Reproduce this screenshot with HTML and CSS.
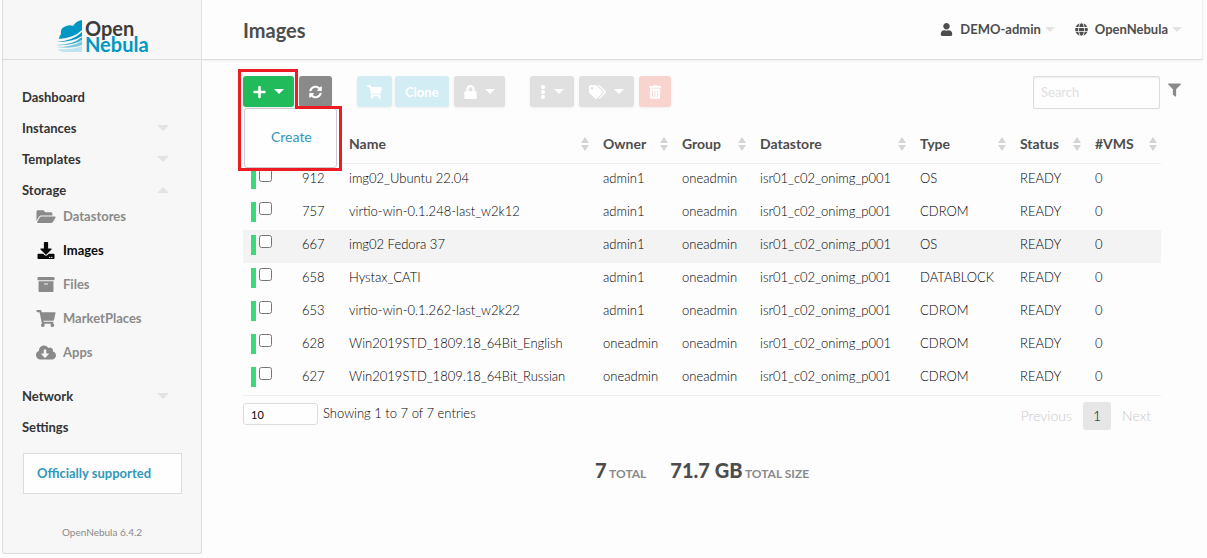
FILE: index.html
```
<!DOCTYPE html>
<html lang="en">
<head>
<meta charset="utf-8">
<title>OpenNebula Sunstone: Images</title>
<link rel="stylesheet" href="styles.css">
</head>
<body>
<svg class="sprite" aria-hidden="true">
  <symbol id="plus" viewBox="0 0 448 512"><path d="M416 208H272V64c0-17.670-14.330-32-32-32h-32c-17.670 0-32 14.330-32 32v144H32c-17.670 0-32 14.330-32 32v32c0 17.670 14.330 32 32 32h144v144c0 17.670 14.330 32 32 32h32c17.670 0 32-14.330 32-32V304h144c17.670 0 32-14.330 32-32v-32c0-17.670-14.330-32-32-32z"/></symbol>
  <symbol id="sync" viewBox="0 0 512 512"><path d="M370.720 133.280C339.458 104.008 298.888 87.962 255.848 88c-77.458.068-144.328 53.178-162.791 126.850-1.344 5.363-6.122 9.150-11.651 9.150H24.103c-7.498 0-13.194-6.807-11.807-14.176C33.933 94.924 134.813 8 256 8c66.448 0 126.791 26.136 171.315 68.685L463.030 40.970C478.149 25.851 504 36.559 504 57.941V192c0 13.255-10.745 24-24 24H345.941c-21.382 0-32.090-25.851-16.971-40.971l41.750-41.749zM32 296h134.059c21.382 0 32.090 25.851 16.971 40.971l-41.750 41.750c31.262 29.273 71.835 45.319 114.876 45.280 77.418-.070 144.315-53.144 162.787-126.849 1.344-5.363 6.122-9.150 11.651-9.150h57.304c7.498 0 13.194 6.807 11.807 14.176C478.067 417.076 377.187 504 256 504c-66.448 0-126.791-26.136-171.315-68.685L48.970 471.030C33.851 486.149 8 475.441 8 454.059V320c0-13.255 10.745-24 24-24z"/></symbol>
  <symbol id="cart" viewBox="0 0 576 512"><path d="M528.120 301.319l47.273-208C578.806 78.301 567.391 64 551.990 64H159.208l-9.166-44.810C147.758 8.021 137.930 0 126.529 0H24C10.745 0 0 10.745 0 24v16c0 13.255 10.745 24 24 24h69.883l70.248 343.435C147.325 417.100 136 435.222 136 456c0 30.928 25.072 56 56 56s56-25.072 56-56c0-15.674-6.447-29.835-16.824-40h209.647C430.447 426.165 424 440.326 424 456c0 30.928 25.072 56 56 56s56-25.072 56-56c0-22.172-12.888-41.332-31.579-50.405l5.517-24.276c3.413-15.018-8.002-29.319-23.403-29.319H218.117l-6.545-32h293.145c11.206 0 20.920-7.754 23.403-18.681z"/></symbol>
  <symbol id="lock" viewBox="0 0 448 512"><path d="M400 224h-24v-72C376 68.200 307.800 0 224 0S72 68.200 72 152v72H48c-26.500 0-48 21.500-48 48v192c0 26.500 21.500 48 48 48h352c26.500 0 48-21.500 48-48V272c0-26.500-21.500-48-48-48zm-104 0H152v-72c0-39.700 32.300-72 72-72s72 32.300 72 72v72z"/></symbol>
  <symbol id="dots" viewBox="0 0 192 512"><circle cx="96" cy="80" r="76"/><circle cx="96" cy="256" r="76"/><circle cx="96" cy="432" r="76"/></symbol>
  <symbol id="tags" viewBox="0 0 640 512"><path d="M497.941 225.941L286.059 14.059A48 48 0 0 0 252.118 0H48C21.490 0 0 21.490 0 48v204.118a48 48 0 0 0 14.059 33.941l211.882 211.882c18.744 18.745 49.136 18.746 67.882 0l204.118-204.118c18.745-18.745 18.745-49.137 0-67.882zM112 160c-26.510 0-48-21.490-48-48s21.490-48 48-48 48 21.490 48 48-21.490 48-48 48zm513.941 133.823L421.823 497.941c-18.745 18.745-49.137 18.745-67.882 0l-.360-.360L527.640 323.522c16.999-16.999 26.360-39.600 26.360-63.640s-9.362-46.641-26.360-63.640L331.397 0h48.721a48 48 0 0 1 33.941 14.059l211.882 211.882c18.745 18.745 18.745 49.137 0 67.882z"/></symbol>
  <symbol id="trash" viewBox="0 0 448 512"><path d="M32 464a48 48 0 0 0 48 48h288a48 48 0 0 0 48-48V128H32zm272-256a16 16 0 0 1 32 0v224a16 16 0 0 1-32 0zm-96 0a16 16 0 0 1 32 0v224a16 16 0 0 1-32 0zm-96 0a16 16 0 0 1 32 0v224a16 16 0 0 1-32 0zM432 32H312l-9.400-18.700A24 24 0 0 0 281.100 0H166.800a23.720 23.720 0 0 0-21.400 13.300L136 32H16A16 16 0 0 0 0 48v32a16 16 0 0 0 16 16h416a16 16 0 0 0 16-16V48a16 16 0 0 0-16-16z"/></symbol>
  <symbol id="user" viewBox="0 0 448 512"><path d="M224 256c70.700 0 128-57.300 128-128S294.700 0 224 0 96 57.300 96 128s57.300 128 128 128zm89.600 32h-16.700c-22.200 10.200-46.900 16-72.900 16s-50.600-5.800-72.900-16h-16.700C60.200 288 0 348.200 0 422.400V464c0 26.500 21.500 48 48 48h352c26.500 0 48-21.500 48-48v-41.600c0-74.200-60.200-134.400-134.400-134.400z"/></symbol>
  <symbol id="globe" viewBox="0 0 496 512"><path d="M336.500 160C322 70.700 287.800 8 248 8s-74 62.700-88.500 152h177zM152 256c0 22.200 1.200 43.500 3.300 64h185.300c2.100-20.500 3.300-41.800 3.300-64s-1.200-43.500-3.300-64H155.300c-2.100 20.500-3.300 41.800-3.300 64zm324.700-96c-28.600-67.900-86.500-120.400-158-141.600 24.400 33.800 41.200 84.700 50 141.600h108zM177.200 18.400C105.800 39.600 47.800 92.100 19.300 160h108c8.700-56.900 25.500-107.800 49.900-141.600zM487.400 192H372.700c2.100 21 3.300 42.500 3.300 64s-1.200 43-3.300 64h114.600c5.500-20.500 8.600-41.800 8.600-64s-3.100-43.500-8.500-64zM120 256c0-21.500 1.200-43 3.300-64H8.600C3.200 212.500 0 233.800 0 256s3.200 43.500 8.600 64h114.600c-2-21-3.200-42.500-3.200-64zm39.500 96c14.500 89.300 48.700 152 88.500 152s74-62.700 88.500-152h-177zm159.300 141.600c71.400-21.200 129.400-73.700 158-141.600h-108c-8.800 56.900-25.600 107.800-50 141.600zM19.300 352c28.600 67.900 86.500 120.400 158 141.600-24.400-33.800-41.200-84.700-50-141.600h-108z"/></symbol>
  <symbol id="filter" viewBox="0 0 512 512"><path d="M487.976 0H24.028C2.710 0-8.047 25.866 7.058 40.971L192 225.941V432c0 7.831 3.821 15.170 10.237 19.662l80 55.980C298.020 518.690 320 507.493 320 487.980V225.941l184.947-184.970C520.021 25.896 509.338 0 487.976 0z"/></symbol>
  <symbol id="folder" viewBox="0 0 576 512"><path d="M572.694 292.093L500.270 416.248A63.997 63.997 0 0 1 444.989 448H45.025c-18.523 0-30.064-20.093-20.731-36.093l72.424-124.155A64 64 0 0 1 152 256h399.964c18.523 0 30.064 20.093 20.730 36.093zM152 224h328v-48c0-26.510-21.490-48-48-48H272l-64-64H48C21.490 64 0 85.490 0 112v278.046l69.077-118.418C86.214 242.250 117.989 224 152 224z"/></symbol>
  <symbol id="download" viewBox="0 0 512 512"><path d="M216 0h80c13.300 0 24 10.700 24 24v168h87.700c17.800 0 26.700 21.500 14.100 34.100L269.700 378.300c-7.500 7.500-19.800 7.500-27.300 0L90.100 226.100c-12.600-12.600-3.700-34.100 14.100-34.100H192V24c0-13.300 10.700-24 24-24zm296 376v112c0 13.300-10.700 24-24 24H24c-13.300 0-24-10.700-24-24V376c0-13.300 10.700-24 24-24h146.700l49 49c20.100 20.100 52.500 20.100 72.600 0l49-49H488c13.300 0 24 10.700 24 24zm-124 88c0-11-9-20-20-20s-20 9-20 20 9 20 20 20 20-9 20-20zm64 0c0-11-9-20-20-20s-20 9-20 20 9 20 20 20 20-9 20-20z"/></symbol>
  <symbol id="archive" viewBox="0 0 512 512"><path d="M32 448c0 17.700 14.300 32 32 32h384c17.700 0 32-14.300 32-32V160H32v288zm160-212c0-6.600 5.400-12 12-12h104c6.600 0 12 5.400 12 12v8c0 6.600-5.400 12-12 12H204c-6.600 0-12-5.400-12-12v-8zM480 32H32C14.300 32 0 46.300 0 64v48c0 8.800 7.200 16 16 16h480c8.800 0 16-7.200 16-16V64c0-17.700-14.300-32-32-32z"/></symbol>
  <symbol id="cloud" viewBox="0 0 640 512"><path d="M537.600 226.600c4.100-10.700 6.400-22.400 6.400-34.600 0-53-43-96-96-96-19.700 0-38.100 6-53.300 16.200C367 64.200 315.300 32 256 32c-88.400 0-160 71.600-160 160 0 2.700.1 5.400.2 8.100C40.200 219.800 0 273.200 0 336c0 79.500 64.500 144 144 144h368c70.700 0 128-57.300 128-128 0-61.900-44-113.600-102.400-125.400zm-132.900 88.700L299.300 420.700c-6.200 6.200-16.400 6.200-22.600 0L171.300 315.300c-10.100-10.100-2.900-27.300 11.300-27.300H248V176c0-8.800 7.200-16 16-16h48c8.800 0 16 7.200 16 16v112h65.400c14.200 0 21.400 17.200 11.300 27.300z"/></symbol>
  <symbol id="sort" viewBox="0 0 8 14"><path d="M4 0l4 6H0zM4 14l4-6H0z"/></symbol>
</svg>

<div class="app">
  <aside class="sidebar">
    <a class="brand" href="#">
      <svg class="brand-mark" viewBox="0 0 26 32" aria-hidden="true">
        <path fill="#0098c3" d="M26 0v10Q18 18 3 19q0-3 2-5-1-5 3-7 5-3 9-1 3-5 9-6z"/>
        <path fill="#0098c3" d="M0 22q17-1 26-10v4Q17 22 0 22z"/>
        <path fill="#35accf" d="M0 25q17 0 26-8v3q-9 6-26 5z"/>
        <path fill="#7cc9df" d="M1 27q15 0 25-6v4Q16 29 1 27z"/>
        <path fill="#bfe4f0" d="M2 29q13 1 24-3v6H8q-4 0-6-3z"/>
      </svg>
      <span class="brand-name"><span>Open</span><span class="brand-blue">Nebula</span></span>
    </a>
    <nav class="menu">
      <a class="menu-item" href="#">Dashboard</a>
      <a class="menu-item" href="#">Instances<span class="caret"></span></a>
      <a class="menu-item" href="#">Templates<span class="caret"></span></a>
      <a class="menu-item" href="#">Storage<span class="caret caret-up"></span></a>
      <div class="submenu">
        <a class="sub-item" href="#"><svg><use href="#folder"/></svg>Datastores</a>
        <a class="sub-item active" href="#"><svg><use href="#download"/></svg>Images</a>
        <a class="sub-item" href="#"><svg><use href="#archive"/></svg>Files</a>
        <a class="sub-item" href="#"><svg><use href="#cart"/></svg>MarketPlaces</a>
        <a class="sub-item" href="#"><svg><use href="#cloud"/></svg>Apps</a>
      </div>
      <a class="menu-item" href="#">Network<span class="caret"></span></a>
      <a class="menu-item" href="#">Settings</a>
    </nav>
    <a class="support" href="#">Officially supported</a>
    <p class="version">OpenNebula 6.4.2</p>
  </aside>

  <main class="main">
    <header class="topbar">
      <h1 class="title">Images</h1>
      <button class="top-menu" type="button"><svg><use href="#user"/></svg>DEMO-admin<span class="caret caret-small"></span></button>
      <button class="top-menu" type="button"><svg><use href="#globe"/></svg>OpenNebula<span class="caret caret-small"></span></button>
    </header>

    <div class="content">
      <div class="toolbar">
        <div class="create">
          <button class="btn green" type="button" aria-label="Add"><svg><use href="#plus"/></svg><span class="arrow"></span></button>
          <div class="dropdown"><a href="#">Create</a></div>
          <svg class="outline" viewBox="0 0 104 102" aria-hidden="true"><path d="M1.500 1.500h57v37h44v62h-101z"/></svg>
        </div>
        <button class="btn dark" type="button" aria-label="Refresh"><svg><use href="#sync"/></svg></button>
        <div class="group">
          <button class="btn blue" type="button" aria-label="Marketplace"><svg class="medium"><use href="#cart"/></svg></button>
          <button class="btn blue" type="button">Clone</button>
        </div>
        <button class="btn grey" type="button" aria-label="Lock"><svg><use href="#lock"/></svg><span class="arrow"></span></button>
        <button class="btn grey apart" type="button" aria-label="More"><svg class="narrow"><use href="#dots"/></svg><span class="arrow"></span></button>
        <button class="btn grey" type="button" aria-label="Labels"><svg class="wide"><use href="#tags"/></svg><span class="arrow"></span></button>
        <button class="btn red" type="button" aria-label="Delete"><svg class="trash"><use href="#trash"/></svg></button>
        <input class="search" type="text" placeholder="Search" aria-label="Search">
        <button class="filter" type="button" aria-label="Filter"><svg><use href="#filter"/></svg></button>
      </div>

      <div class="list">
        <table class="table">
          <colgroup><col class="c-check"><col class="c-id"><col><col class="c-owner"><col class="c-group"><col class="c-store"><col class="c-type"><col class="c-status"><col class="c-vms"></colgroup>
          <thead>
            <tr><th></th><th></th><th><div>Name<svg><use href="#sort"/></svg></div></th><th><div>Owner<svg><use href="#sort"/></svg></div></th><th><div>Group<svg><use href="#sort"/></svg></div></th><th><div>Datastore<svg><use href="#sort"/></svg></div></th><th><div>Type<svg><use href="#sort"/></svg></div></th><th><div>Status<svg><use href="#sort"/></svg></div></th><th><div>#VMS<svg><use href="#sort"/></svg></div></th></tr>
          </thead>
          <tbody>
            <tr><td class="check"><input type="checkbox" aria-label="Select 912"></td><td>912</td><td>img02_Ubuntu 22.04</td><td>admin1</td><td>oneadmin</td><td>isr01_c02_onimg_p001</td><td>OS</td><td>READY</td><td>0</td></tr>
            <tr><td class="check"><input type="checkbox" aria-label="Select 757"></td><td>757</td><td>virtio-win-0.1.248-last_w2k12</td><td>admin1</td><td>oneadmin</td><td>isr01_c02_onimg_p001</td><td>CDROM</td><td>READY</td><td>0</td></tr>
            <tr class="hovered"><td class="check"><input type="checkbox" aria-label="Select 667"></td><td>667</td><td>img02 Fedora 37</td><td>admin1</td><td>oneadmin</td><td>isr01_c02_onimg_p001</td><td>OS</td><td>READY</td><td>0</td></tr>
            <tr><td class="check"><input type="checkbox" aria-label="Select 658"></td><td>658</td><td>Hystax_CATI</td><td>admin1</td><td>oneadmin</td><td>isr01_c02_onimg_p001</td><td>DATABLOCK</td><td>READY</td><td>0</td></tr>
            <tr><td class="check"><input type="checkbox" aria-label="Select 653"></td><td>653</td><td>virtio-win-0.1.262-last_w2k22</td><td>admin1</td><td>oneadmin</td><td>isr01_c02_onimg_p001</td><td>CDROM</td><td>READY</td><td>0</td></tr>
            <tr><td class="check"><input type="checkbox" aria-label="Select 628"></td><td>628</td><td>Win2019STD_1809.18_64Bit_English</td><td>oneadmin</td><td>oneadmin</td><td>isr01_c02_onimg_p001</td><td>CDROM</td><td>READY</td><td>0</td></tr>
            <tr><td class="check"><input type="checkbox" aria-label="Select 627"></td><td>627</td><td>Win2019STD_1809.18_64Bit_Russian</td><td>oneadmin</td><td>oneadmin</td><td>isr01_c02_onimg_p001</td><td>CDROM</td><td>READY</td><td>0</td></tr>
          </tbody>
        </table>
        <div class="table-foot">
          <select class="length" aria-label="Entries per page"><option>10</option></select>
          <span class="info">Showing 1 to 7 of 7 entries</span>
          <div class="pager"><a href="#">Previous</a><a class="current" href="#">1</a><a href="#">Next</a></div>
        </div>
        <div class="totals">
          <p><strong>7</strong> TOTAL</p>
          <p><strong>71.7 GB</strong> TOTAL SIZE</p>
        </div>
      </div>
    </div>
  </main>
</div>
</body>
</html>
```
FILE: styles.css
```
* { box-sizing: border-box; }
body { margin: 0; background: #fdfdfd; color: #000; font: 300 14px/20px Lato, sans-serif; }
a { color: inherit; text-decoration: none; }
p, h1 { margin: 0; }
button, input, select { font-family: inherit; }
button { border: 0; background: none; cursor: pointer; }
svg { fill: currentColor; flex: none; }
.sprite { position: absolute; width: 0; height: 0; }

.app { display: flex; align-items: flex-start; padding: 0 4px 0 2px; }

.sidebar { width: 200px; flex: none; background: #f7f7f7; border: 1px solid #dcdcdc; border-top: 0; border-radius: 0 0 3px 3px; }
.brand { display: flex; gap: 3px; height: 60px; padding: 20px 0 0 53px; border-bottom: 1px solid #dcdcdc; }
.brand-mark { width: 26px; height: 32px; }
.brand-name { display: flex; flex-direction: column; color: #3c3c3c; font-size: 20px; font-weight: 700; line-height: 16px; }
.brand-blue { color: #0098c3; }

.menu { padding: 21px 32px 0 19px; color: #333; font-size: 13px; font-weight: 700; }
.menu-item { display: flex; align-items: center; justify-content: space-between; height: 31px; }
.caret { border: 6px solid transparent; border-top-color: #e3e3e3; border-bottom-width: 0; }
.caret-up { border-top-width: 0; border-bottom: 6px solid #e3e3e3; }
.caret-small { border-width: 5px 5px 0; margin-left: 4px; }
.submenu { padding: 0 0 11px 14px; margin-top: -6px; color: #8a8a8a; }
.sub-item { display: flex; align-items: center; gap: 7px; height: 34px; }
.sub-item svg { width: 20px; height: 17px; }
.active { color: #0a0a0a; }
.support { display: block; margin: 11px 19px 0 20px; padding: 9px 13px 10px; border: 1px solid #dcdcdc; background: #fefefe; color: #3098b8; font-size: 13px; font-weight: 700; }
.version { padding: 28px 0 11px; color: #8a8a8a; font-size: 10px; font-weight: 400; text-align: center; }

.main { flex: 1; min-width: 0; }
.topbar { display: flex; align-items: center; gap: 20px; height: 60px; padding: 0 20px 0 41px; border: solid #dcdcdc; border-width: 0 1px 1px 0; border-right-color: #eee; box-shadow: 0 1px 2px #f2f2f2; color: #4d4d4d; }
.title { flex: 1; font-size: 20px; line-height: 24px; font-weight: 700; }
.top-menu { display: flex; align-items: center; padding: 0 0 1px; color: inherit; font-size: 13px; line-height: 20px; font-weight: 700; }
.top-menu svg { width: 13px; height: 13px; margin-right: 7px; }

.content { padding: 16px 22px 0 41px; }
.toolbar { display: flex; align-items: flex-start; gap: 5px; height: 48px; }
.create { position: relative; }
.btn { display: flex; align-items: center; justify-content: center; gap: 8px; height: 31px; padding: 0 10px; border-radius: 3px; color: #fff; font-size: 13px; line-height: 20px; font-weight: 700; box-shadow: 0 1px 3px #eee; }
.btn svg { width: 13px; height: 14px; }
.btn .narrow { width: 6px; }
.btn .trash { width: 12px; }
.btn .medium { width: 15px; }
.btn .wide { width: 17px; }
.arrow { border: 5px solid transparent; border-top-color: #fff; border-bottom-width: 0; }
.green { background: #22bb5b; }
.dark { background: #8a8a8a; }
.blue { background: #d3edf4; }
.grey { background: #e0e0e0; }
.red { background: #f9d3ce; }
.group { display: flex; gap: 3px; margin-left: 20px; }
.apart { margin-left: 20px; }
.dropdown { position: absolute; z-index: 1; top: 32px; left: 1px; width: 93px; padding: 18px 0 20px 26px; border: 1px solid #cacaca; border-radius: 3px; background: #fefefe; color: #3098b8; font-weight: 400; }
.outline { position: absolute; z-index: 2; top: -7px; left: -5px; width: 104px; height: 102px; fill: none; stroke: #ed1c24; stroke-width: 3px; pointer-events: none; }
.search { width: 127px; height: 33px; margin-left: auto; padding: 0 7px 2px; border: 1px solid #dcdcdc; border-radius: 2px; background: #fefefe; box-shadow: inset 0 1px 2px #eee; font-size: 13px; font-weight: 400; }
.search::placeholder { color: #e0e0e0; opacity: 1; }
.filter { padding: 7px 0 0 3px; color: #8a8a8a; }
.filter svg { display: block; width: 13px; height: 14px; }

.list { padding-right: 20px; }
.table { width: 100%; table-layout: fixed; border-collapse: separate; border-spacing: 0; border-bottom: 1px solid #eee; }
.c-check { width: 49px; }
.c-id { width: 47px; }
.c-owner { width: 79px; }
.c-group { width: 78px; }
.c-store { width: 160px; }
.c-type { width: 100px; }
.c-status { width: 75px; }
.c-vms { width: 76px; }
th { height: 40px; padding: 1px 4px 0 10px; border-bottom: 1px solid #eee; color: #4d4d4d; font-weight: 700; text-align: left; }
th div { display: flex; align-items: center; justify-content: space-between; }
th svg { width: 8px; height: 14px; color: #d5d5d5; }
td { height: 33px; padding: 4px 0 9px 10px; font-size: 13px; line-height: 20px; white-space: nowrap; }
.check { padding: 5px 0 0 8px; vertical-align: top; background: linear-gradient(#3dd978, #3dd978) 8px 5px / 5px 20px no-repeat; }
.check input { display: block; width: 13px; height: 13px; margin: 0 0 0 8px; }
.hovered { background-color: #f3f3f3; }

.table-foot { display: flex; align-items: flex-start; padding-top: 6px; }
.length { appearance: none; width: 75px; height: 22px; margin: 1px 5px 0 0; padding: 0 7px; border: 1px solid #dcdcdc; border-radius: 3px; background: #fefefe; color: #0a0a0a; font-size: 11px; }
.info { padding-top: 1px; font-size: 13px; }
.pager { display: flex; gap: 1px; margin-left: auto; line-height: 28px; color: #cacaca; }
.pager a { padding: 0 10px; }
.pager .current { border-radius: 3px; background: #e6e6e6; color: #0a0a0a; }
.totals { display: flex; justify-content: center; gap: 24px; padding-top: 28px; color: #8a8a8a; font-size: 12px; line-height: 24px; font-weight: 700; }
.totals strong { color: #4d4d4d; font-size: 20px; }
```
